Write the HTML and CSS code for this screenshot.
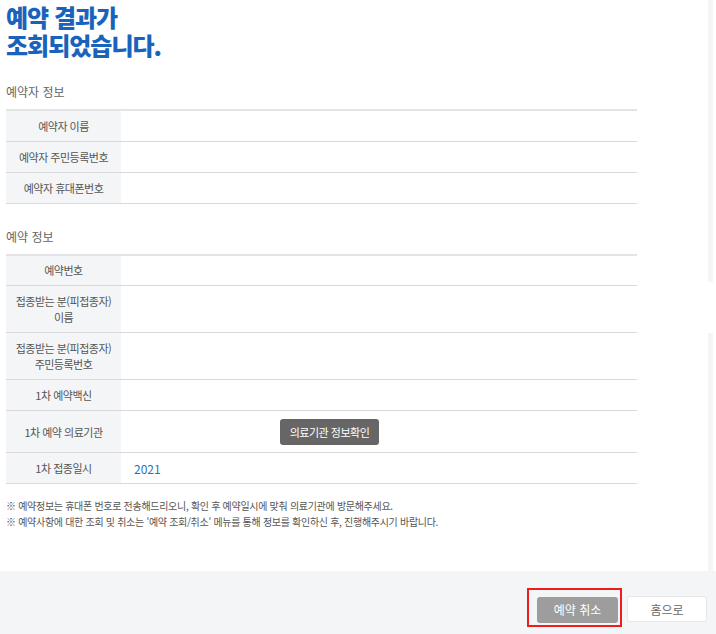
FILE: index.html
```html
<!DOCTYPE html>
<html lang="ko">
<head>
  <meta charset="UTF-8">
  <meta name="viewport" content="width=device-width, initial-scale=1">
  <title>예약 조회 결과</title>
  <link rel="stylesheet" href="styles.css">
</head>
<body>
  <div class="page">
    <div class="content">
      <h1 class="title">예약 결과가<br>조회되었습니다.</h1>

      <h2 class="section-title">예약자 정보</h2>
      <table class="info-table">
        <tr><th>예약자 이름</th><td></td></tr>
        <tr><th>예약자 주민등록번호</th><td></td></tr>
        <tr><th>예약자 휴대폰번호</th><td></td></tr>
      </table>

      <h2 class="section-title">예약 정보</h2>
      <table class="info-table">
        <tr><th>예약번호</th><td></td></tr>
        <tr class="tall"><th>접종받는 분(피접종자)<br>이름</th><td></td></tr>
        <tr class="tall"><th>접종받는 분(피접종자)<br>주민등록번호</th><td></td></tr>
        <tr><th>1차 예약백신</th><td></td></tr>
        <tr class="btn-row"><th>1차 예약 의료기관</th><td><button class="info-button">의료기관 정보확인</button></td></tr>
        <tr><th>1차 접종일시</th><td class="date">2021</td></tr>
      </table>

      <ul class="notes">
        <li>※ 예약정보는 휴대폰 번호로 전송해드리오니, 확인 후 예약일시에 맞춰 의료기관에 방문해주세요.</li>
        <li>※ 예약사항에 대한 조회 및 취소는 '예약 조회/취소' 메뉴를 통해 정보를 확인하신 후, 진행해주시기 바랍니다.</li>
      </ul>
    </div>
    <div class="side-strip">
      <div class="strip-top"></div>
      <div class="strip-gap"></div>
      <div class="strip-bottom"></div>
    </div>
  </div>

  <div class="footer">
    <div class="highlight">
      <button class="btn btn-cancel">예약 취소</button>
    </div>
    <button class="btn btn-home">홈으로</button>
  </div>
</body>
</html>
```

FILE: styles.css
```css
* {
  box-sizing: border-box;
}

body {
  margin: 0;
  background-color: #ffffff;
  font-family: "Noto Sans CJK KR", "Noto Sans", sans-serif;
  color: #555;
}

.page {
  display: flex;
  height: 571px;
}

.content {
  width: 708px;
  padding: 3px 0 0 6px;
  background-color: #ffffff;
}

.title {
  margin: 0;
  font-size: 24px;
  line-height: 28px;
  font-weight: 900;
  letter-spacing: -1px;
  color: #1a63bd;
}

.section-title {
  margin: 24px 0 8px;
  font-size: 12px;
  line-height: 18px;
  font-weight: 400;
  color: #666;
}

.info-table {
  width: 631px;
  border-collapse: collapse;
  border-top: 2px solid #e4e4e6;
}

.info-table th {
  width: 115px;
  height: 31px;
  padding: 0;
  background-color: #f4f5f7;
  font-size: 11px;
  line-height: 16px;
  font-weight: 400;
  letter-spacing: -0.5px;
  color: #555;
  border-bottom: 1px solid #d9d9dc;
}

.info-table td {
  padding: 0 0 0 13px;
  border-bottom: 1px solid #d9d9dc;
  font-size: 12px;
}

.info-table tr.tall th {
  height: 47px;
}

.info-table tr.btn-row th {
  height: 42px;
}

.info-table td.date {
  color: #1f74c4;
}

.info-button {
  margin-left: 146px;
  width: 99px;
  height: 26px;
  border: none;
  border-radius: 3px;
  background-color: #666666;
  color: #ffffff;
  font-family: inherit;
  font-size: 11px;
  letter-spacing: -0.5px;
  cursor: pointer;
}

.notes {
  list-style: none;
  margin: 14px 0 0;
  padding: 0;
  font-size: 10px;
  line-height: 16px;
  letter-spacing: -0.3px;
  color: #555;
}

.side-strip {
  width: 5px;
  display: flex;
  flex-direction: column;
}

.strip-top {
  height: 282px;
  background-color: #f4f5f7;
}

.strip-gap {
  height: 51px;
}

.strip-bottom {
  flex: 1;
  background-color: #f4f5f7;
}

.footer {
  height: 63px;
  background-color: #f4f5f7;
  display: flex;
  justify-content: flex-end;
  align-items: flex-start;
  gap: 5px;
  padding: 17px 9px 0 0;
}

.highlight {
  border: 2px solid #ee1c1c;
  padding: 6px 2px 2px 8px;
}

.btn {
  width: 81px;
  height: 26px;
  border-radius: 3px;
  font-family: inherit;
  font-size: 12px;
  cursor: pointer;
}

.btn-cancel {
  border: none;
  background-color: #9d9d9d;
  color: #ffffff;
}

.btn-home {
  margin-top: 8px;
  width: 80px;
  border: 1px solid #e6e7ea;
  background-color: #ffffff;
  color: #666;
}
```
